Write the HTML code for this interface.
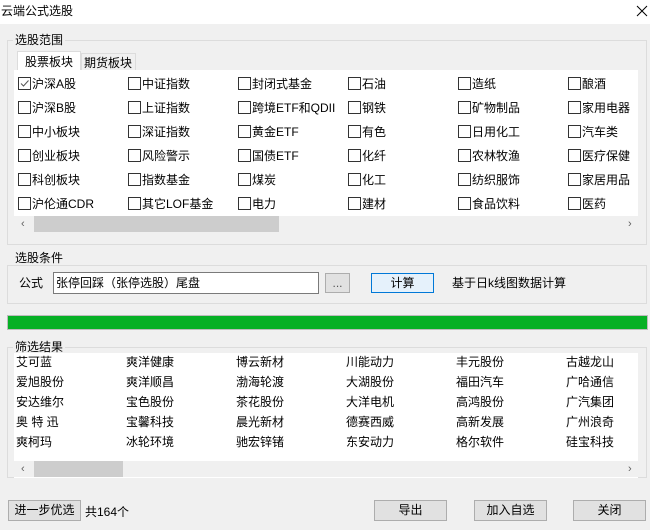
<!DOCTYPE html><html><head><meta charset="utf-8"><style>
*{margin:0;padding:0;box-sizing:border-box}
body{width:650px;height:530px;background:#f0f0f0;font-family:"Liberation Sans","Noto Sans CJK SC","WenQuanYi Zen Hei",sans-serif;font-size:12px;color:#000;position:relative;overflow:hidden}
.a{position:absolute;white-space:nowrap;line-height:14px}
.g{position:absolute;border:1px solid #dcdcdc}
.gl{position:absolute;background:#f0f0f0;padding:0 2px;line-height:14px}
.cb{position:absolute;width:13px;height:13px;border:1px solid #333;background:#fff}
.btn{position:absolute;border:1px solid #adadad;background:#e1e1e1;text-align:center;line-height:18px}
</style></head><body>
<div style="position:absolute;left:0;top:0;width:650px;height:24px;background:#fff"></div>
<div class="a" style="left:1px;top:4px;font-size:12px">云端公式选股</div>
<svg style="position:absolute;left:636px;top:5px" width="12" height="12"><path d="M1 1L11 11M11 1L1 11" stroke="#000" stroke-width="1"/></svg>

<div class="g" style="left:7px;top:40px;width:640px;height:205px"></div>
<div class="gl" style="left:13px;top:33px">选股范围</div>
<div style="position:absolute;left:17px;top:51px;width:64px;height:20px;background:#fff;border:1px solid #dcdcdc;border-bottom:none"></div>
<div class="a" style="left:25px;top:55px">股票板块</div>
<div style="position:absolute;left:81px;top:53px;width:55px;height:18px;border:1px solid #dcdcdc;border-bottom:none"></div>
<div class="a" style="left:84px;top:56px">期货板块</div>
<div style="position:absolute;left:14px;top:70px;width:624px;height:162px;background:#fff"></div>
<div id="grid"></div>
<div style="position:absolute;left:14px;top:216px;width:624px;height:16px;background:#f0f0f0"></div>
<div style="position:absolute;left:34px;top:222px;width:245px;height:18px;background:#cdcdcd;top:222px;height:0"></div>
<div style="position:absolute;left:34px;top:222px;width:245px;height:18px;background:#cdcdcd;display:none"></div>
<div style="position:absolute;left:34px;top:222px;width:245px;height:0"></div>
<div style="position:absolute;left:34px;top:222px;width:0"></div>
<div style="position:absolute;left:34px;top:222px"></div>
<div style="position:absolute;left:34px;top:222px"></div>
<div style="position:absolute;left:34px;top:222px"></div>
<div style="position:absolute;left:34px;top:222px"></div>
<div style="position:absolute;left:34px;top:222px;"></div>
<div style="position:absolute;left:34px;top:222px"></div>
<div style="position:absolute;left:34px;top:222px;width:245px;height:0"></div>
<div style="position:absolute;left:34px;top:222px;width:245px;height:0"></div>
<div style="position:absolute;left:34px;top:222px;width:245px;height:0"></div>
<div style="position:absolute;left:34px;top:222px;width:245px;height:0"></div>
<div style="position:absolute;left:34px;top:222px;width:245px;height:0"></div>
<div style="position:absolute;left:34px;top:222px;width:245px;height:0"></div>
<div style="position:absolute;left:34px;top:222px;width:245px;height:0"></div>
<div style="position:absolute;left:34px;top:222px;width:245px;height:0"></div>
<div style="position:absolute;left:34px;top:222px;width:245px;height:0"></div>
<div style="position:absolute;left:34px;top:222px;width:245px;height:0"></div>
<div style="position:absolute;left:34px;top:222px;width:245px;height:0"></div>
<div style="position:absolute;left:34px;top:222px;width:245px;height:0"></div>
<div style="position:absolute;left:34px;top:222px;width:245px;height:0"></div>
<div style="position:absolute;left:34px;top:222px;width:245px;height:0"></div>
<div style="position:absolute;left:34px;top:216px;width:245px;height:16px;background:#cdcdcd"></div>
<div class="a" style="left:21px;top:217px;color:#606060;font-size:11px">‹</div>
<div class="a" style="left:628px;top:217px;color:#606060;font-size:11px">›</div>

<div class="g" style="left:7px;top:265px;width:640px;height:76px;top:265px;height:0;border:none"></div>
<div class="g" style="left:7px;top:265px;width:640px;height:39px"></div>
<div class="gl" style="left:13px;top:251px">选股条件</div>
<div class="a" style="left:19px;top:276px">公式</div>
<div style="position:absolute;left:53px;top:272px;width:266px;height:22px;background:#fff;border:1px solid #7a7a7a"></div>
<div class="a" style="left:56px;top:276px">张停回踩（张停选股）尾盘</div>
<div class="btn" style="left:325px;top:273px;width:25px;height:20px;color:#555">...</div>
<div class="btn" style="left:371px;top:273px;width:63px;height:20px;background:#e5f1fb;border-color:#0078d7">计算</div>
<div class="a" style="left:452px;top:276px">基于日k线图数据计算</div>

<div style="position:absolute;left:7px;top:315px;width:641px;height:15px;background:#06b025;border:1px solid #bcbcbc"></div>

<div class="g" style="left:7px;top:347px;width:640px;height:131px"></div>
<div class="gl" style="left:13px;top:340px">筛选结果</div>
<div style="position:absolute;left:14px;top:353px;width:624px;height:125px;background:#fff"></div>
<div id="res"></div>
<div style="position:absolute;left:14px;top:461px;width:624px;height:16px;background:#f0f0f0"></div>
<div style="position:absolute;left:34px;top:461px;width:89px;height:16px;background:#cdcdcd"></div>
<div class="a" style="left:21px;top:462px;color:#606060;font-size:11px">‹</div>
<div class="a" style="left:628px;top:462px;color:#606060;font-size:11px">›</div>

<div class="btn" style="left:8px;top:500px;width:73px;height:21px">进一步优选</div>
<div class="a" style="left:85px;top:505px">共164个</div>
<div class="btn" style="left:374px;top:500px;width:73px;height:21px">导出</div>
<div class="btn" style="left:474px;top:500px;width:73px;height:21px">加入自选</div>
<div class="btn" style="left:573px;top:500px;width:73px;height:21px">关闭</div>

<script>
var cats=[["沪深A股","中证指数","封闭式基金","石油","造纸","酿酒"],["沪深B股","上证指数","跨境ETF和QDII","钢铁","矿物制品","家用电器"],["中小板块","深证指数","黄金ETF","有色","日用化工","汽车类"],["创业板块","风险警示","国债ETF","化纤","农林牧渔","医疗保健"],["科创板块","指数基金","煤炭","化工","纺织服饰","家居用品"],["沪伦通CDR","其它LOF基金","电力","建材","食品饮料","医药"]];
var h="";
for(var r=0;r<6;r++)for(var c=0;c<6;c++){var x=18+c*110,y=77+r*24;
h+='<div class="cb" style="left:'+x+'px;top:'+y+'px">'+(r==0&&c==0?'<svg width="11" height="11" style="position:absolute;left:0;top:0"><path d="M2 5.5L4.5 8L9.5 2.5" stroke="#555" fill="none"/></svg>':'')+'</div><div class="a" style="left:'+(x+14)+'px;top:'+(y)+'px">'+cats[r][c]+'</div>';}
document.getElementById("grid").outerHTML=h;
var res=[["艾可蓝","爽洋健康","博云新材","川能动力","丰元股份","古越龙山"],["爱旭股份","爽洋顺昌","渤海轮渡","大湖股份","福田汽车","广哈通信"],["安达维尔","宝色股份","茶花股份","大洋电机","高鸿股份","广汽集团"],["奥 特 迅","宝馨科技","晨光新材","德赛西威","高新发展","广州浪奇"],["爽柯玛","冰轮环境","驰宏锌锗","东安动力","格尔软件","硅宝科技"]];
h="";
for(var r=0;r<5;r++)for(var c=0;c<6;c++){h+='<div class="a" style="left:'+(16+c*110)+'px;top:'+(355+r*20)+'px">'+res[r][c]+'</div>';}
document.getElementById("res").outerHTML=h;
</script>
</body></html>
